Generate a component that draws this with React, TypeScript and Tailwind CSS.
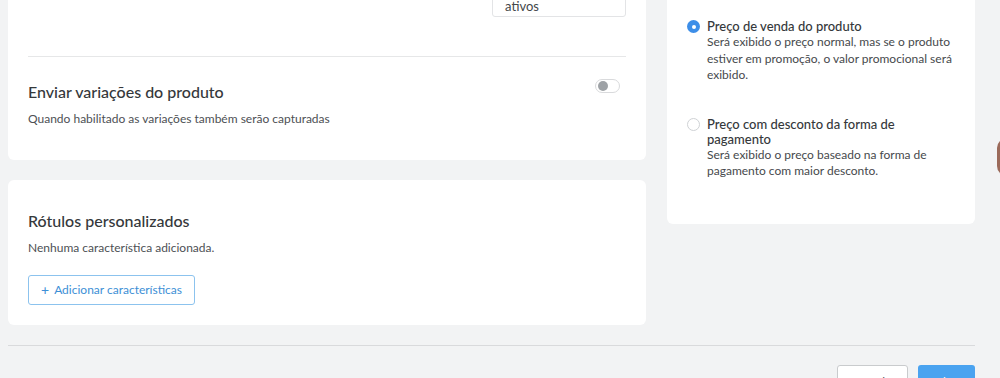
import React from "react";

type PriceOption = {
  id: string;
  title: string;
  description: string;
  checked: boolean;
};

const priceOptions: PriceOption[] = [
  {
    id: "venda",
    title: "Preço de venda do produto",
    description:
      "Será exibido o preço normal, mas se o produto estiver em promoção, o valor promocional será exibido.",
    checked: true,
  },
  {
    id: "desconto",
    title: "Preço com desconto da forma de pagamento",
    description:
      "Será exibido o preço baseado na forma de pagamento com maior desconto.",
    checked: false,
  },
];

function Toggle() {
  return (
    <div className="w-[25px] h-[14px] rounded-full border border-[#d9dadc] bg-white flex items-center px-[2px]">
      <div className="w-[10px] h-[10px] rounded-full bg-[#9ea2a6]" />
    </div>
  );
}

function Radio({ checked }: { checked: boolean }) {
  if (checked) {
    return (
      <div className="w-[13px] h-[13px] rounded-full bg-[#3d8ee8] flex items-center justify-center shrink-0 mt-[1px]">
        <div className="w-[4px] h-[4px] rounded-full bg-white" />
      </div>
    );
  }
  return (
    <div className="w-[13px] h-[13px] rounded-full border border-[#cfd2d5] bg-white shrink-0 mt-[1px]" />
  );
}

export default function App() {
  return (
    <div
      className="w-[1000px] h-[378px] overflow-hidden bg-[#f2f3f4] flex text-[#3a3d40]"
      style={{ fontFamily: "Lato, 'Noto Sans', sans-serif" }}
    >
      <div className="flex-1 flex flex-col pl-2 pr-[25px] mt-[-60px]">
        <div className="flex gap-[21px]">
          {/* left column */}
          <div className="w-[638px] flex flex-col gap-5">
            <div className="bg-white rounded-md px-5 pt-10 pb-[32px]">
              <div className="flex justify-end">
                <div className="w-[134px] h-[37px] border border-[#e3e4e6] rounded-[3px] flex items-end px-[12px] pb-[3px] text-[13px] leading-[13px] text-[#44474a]">
                  ativos
                </div>
              </div>
              <div className="mt-[39px] border-t border-[#e6e7e8]" />
              <div className="flex justify-between items-start mt-[22px]">
                <div>
                  <h3 className="text-[16px] leading-5 font-medium text-[#35383b] mt-[3px]">
                    Enviar variações do produto
                  </h3>
                  <p className="text-[12px] text-[#4d5054] mt-[8px]">
                    Quando habilitado as variações também serão capturadas
                  </p>
                </div>
                <div className="mr-[6px]">
                  <Toggle />
                </div>
              </div>
            </div>

            <div className="bg-white rounded-md px-5 pt-[31px] pb-[20px]">
              <h3 className="text-[16px] leading-5 font-medium text-[#35383b]">
                Rótulos personalizados
              </h3>
              <p className="text-[12px] text-[#4d5054] mt-[8px]">
                Nenhuma característica adicionada.
              </p>
              <button className="mt-[18px] h-[30px] w-[167px] border border-[#8cc3ee] rounded-[3px] text-[12px] text-[#3d8fd6] flex items-center justify-center gap-[5px]">
                <span className="text-[14px] leading-none">+</span>
                Adicionar características
              </button>
            </div>
          </div>

          {/* right column */}
          <div className="w-[308px]">
            <div className="bg-white rounded-md px-5 pt-[79px] pb-[44px] flex flex-col gap-[33px]">
              {priceOptions.map((opt) => (
                <div key={opt.id} className="flex gap-[7px]">
                  <Radio checked={opt.checked} />
                  <div className="w-[256px]">
                    <div className="text-[13px] leading-[15px] font-medium text-[#35383b]">
                      {opt.title}
                    </div>
                    <div className="text-[12px] leading-[16.5px] text-[#46494c]">
                      {opt.description}
                    </div>
                  </div>
                </div>
              ))}
            </div>
          </div>
        </div>

        <div className="mt-[20px] border-t border-[#d9dadc]" />
        <div className="flex justify-end gap-[10px] mt-[19px]">
          <button className="w-[71px] h-[30px] border border-[#c9cbcd] rounded-[3px] bg-white text-[12px] text-[#55585b] pt-[4px]">
            Cancelar
          </button>
          <button className="w-[57px] h-[30px] rounded-[3px] bg-[#4aa3f0] text-[12px] text-white pt-[4px]">
            Salvar
          </button>
        </div>
      </div>

      {/* right edge of window */}
      <div className="relative w-[4px] border-l border-[#d4d5d7] bg-[#e9eaeb]">
        <div className="absolute left-[-4px] top-[138px] w-[20px] h-[38px] rounded-full bg-[#9b6a5a]" />
      </div>
    </div>
  );
}
